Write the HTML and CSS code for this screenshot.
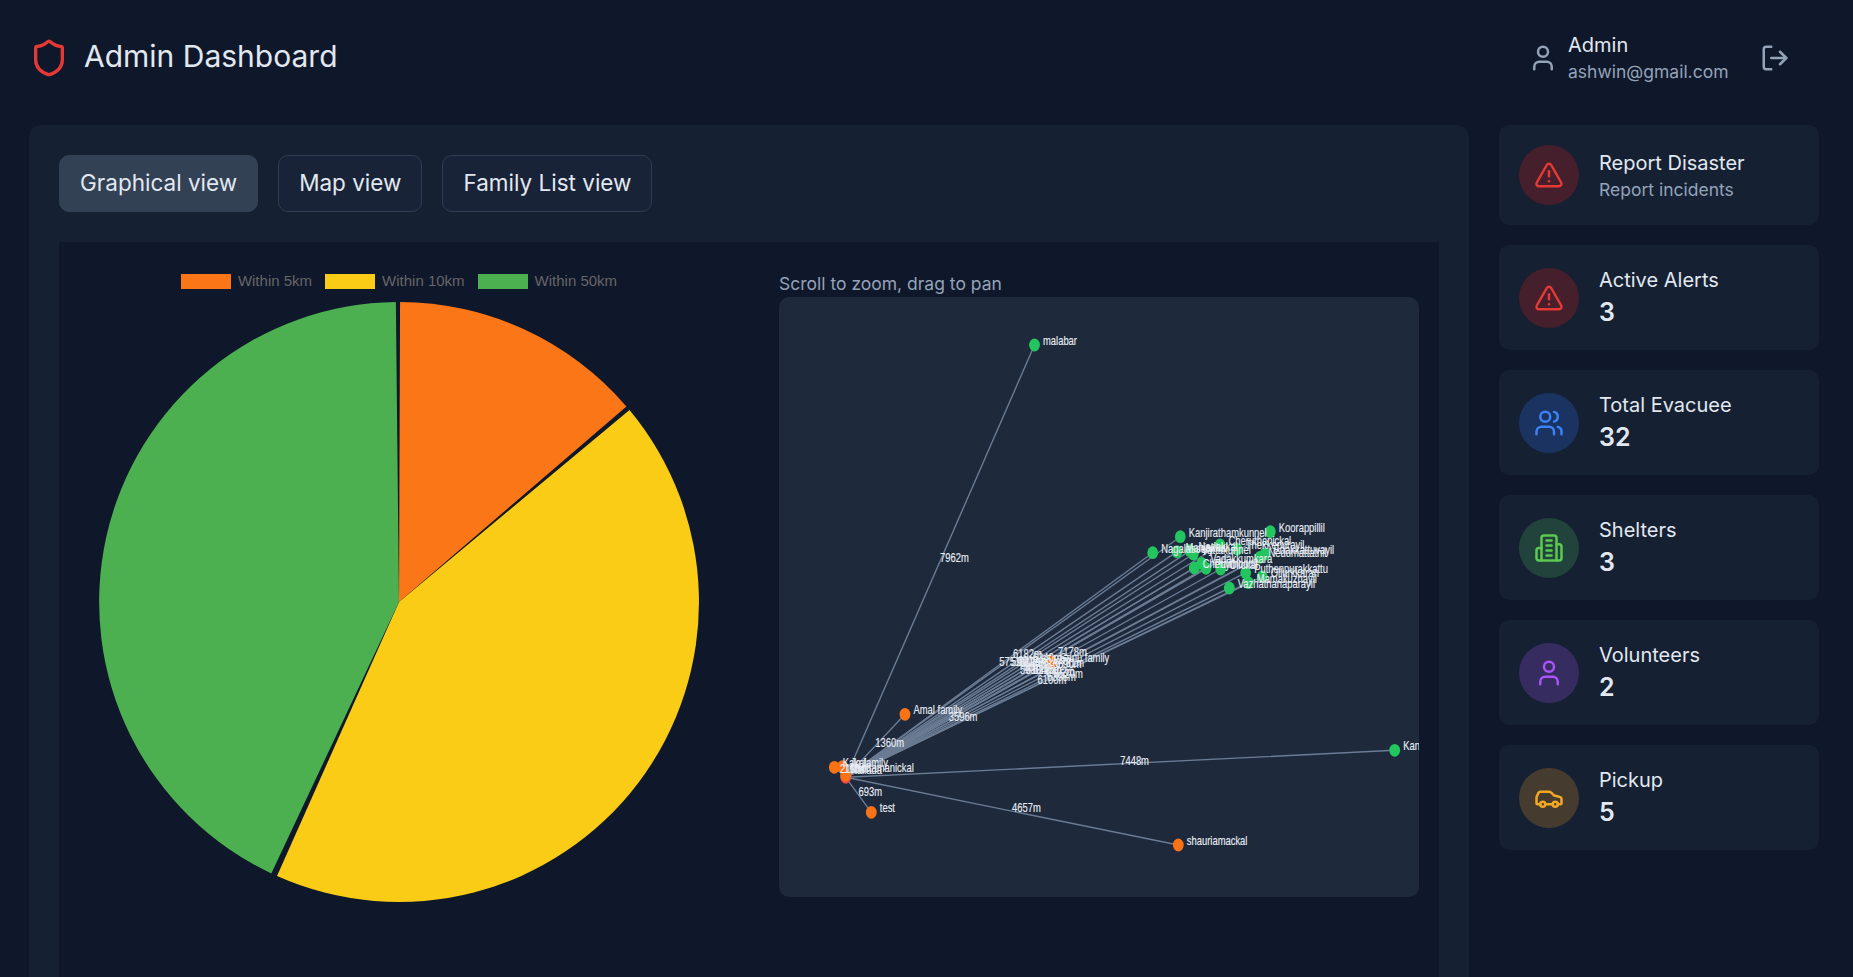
FILE: index.html
```html
<!DOCTYPE html>
<html>
<head>
  <title>Admin Dashboard</title>
  <link rel="stylesheet" href="styles.css">
</head>
<body>
  <!-- Header -->
  <header class="topBar">
    <div class="brand">
      <svg class="shieldIcon" viewBox="0 0 24 24"><path d="M20 13c0 5-3.5 7.5-7.66 8.95a1 1 0 0 1-.67-.01C7.5 20.5 4 18 4 13V6a1 1 0 0 1 1-1c2 0 4.5-1.2 6.24-2.72a1.17 1.17 0 0 1 1.52 0C14.51 3.81 17 5 19 5a1 1 0 0 1 1 1z"/></svg>
      <h1>Admin Dashboard</h1>
    </div>
    <div class="account">
      <svg class="accountIcon" viewBox="0 0 24 24"><path d="M19 21v-2a4 4 0 0 0-4-4H9a4 4 0 0 0-4 4v2"/><circle cx="12" cy="7" r="4"/></svg>
      <div>
        <div class="accountName">Admin</div>
        <div class="accountMail">ashwin@gmail.com</div>
      </div>
      <svg class="logoutIcon" viewBox="0 0 24 24"><path d="M9 21H5a2 2 0 0 1-2-2V5a2 2 0 0 1 2-2h4"/><polyline points="16 17 21 12 16 7"/><line x1="21" y1="12" x2="9" y2="12"/></svg>
    </div>
  </header>

  <div class="layout">
    <!-- Main panel -->
    <main class="panel">
      <div class="tabs">
        <button class="tab active">Graphical view</button>
        <button class="tab">Map view</button>
        <button class="tab">Family List view</button>
      </div>
      <div class="charts">
        <div class="pieCol">
          <div class="legend">
            <span class="swatch orange"></span><span class="legendText">Within 5km</span>
            <span class="swatch yellow"></span><span class="legendText">Within 10km</span>
            <span class="swatch green"></span><span class="legendText">Within 50km</span>
          </div>
          <svg class="pie" width="640" height="620" viewBox="0 0 640 620">
            <path fill="#fb7616" d="M320 310L321.05 10A300 300 0 0 1 547.4 114.4Z"/>
            <path fill="#facc15" d="M320 310L550.5 118A300 300 0 0 1 198 584.06Z"/>
            <path fill="#4caf50" d="M320 310L192.3 581.4A300 300 0 0 1 316.86 10.02Z"/>
          </svg>
        </div>
        <div class="graphCol">
          <p class="hint">Scroll to zoom, drag to pan</p>
          <div class="graphBox">
            <svg id="graph" width="640" height="600" viewBox="0 -0.5 640 600"></svg>
          </div>
        </div>
      </div>
    </main>

    <!-- Side cards -->
    <aside class="side">
      <div class="card">
        <span class="badge badgeRed"><svg viewBox="0 0 24 24"><path d="m21.73 18-8-14a2 2 0 0 0-3.48 0l-8 14A2 2 0 0 0 4 21h16a2 2 0 0 0 1.73-3"/><path d="M12 9v4"/><path d="M12 17h.01"/></svg></span>
        <div>
          <div class="cardTitle">Report Disaster</div>
          <div class="cardSub">Report incidents</div>
        </div>
      </div>
      <div class="card">
        <span class="badge badgeRed"><svg viewBox="0 0 24 24"><path d="m21.73 18-8-14a2 2 0 0 0-3.48 0l-8 14A2 2 0 0 0 4 21h16a2 2 0 0 0 1.73-3"/><path d="M12 9v4"/><path d="M12 17h.01"/></svg></span>
        <div>
          <div class="cardTitle">Active Alerts</div>
          <div class="cardValue">3</div>
        </div>
      </div>
      <div class="card">
        <span class="badge badgeBlue"><svg viewBox="0 0 24 24"><path d="M16 21v-2a4 4 0 0 0-4-4H6a4 4 0 0 0-4 4v2"/><circle cx="9" cy="7" r="4"/><path d="M22 21v-2a4 4 0 0 0-3-3.87"/><path d="M16 3.13a4 4 0 0 1 0 7.75"/></svg></span>
        <div>
          <div class="cardTitle">Total Evacuee</div>
          <div class="cardValue">32</div>
        </div>
      </div>
      <div class="card">
        <span class="badge badgeGreen"><svg viewBox="0 0 24 24"><path d="M6 22V4a2 2 0 0 1 2-2h8a2 2 0 0 1 2 2v18Z"/><path d="M6 12H4a2 2 0 0 0-2 2v6a2 2 0 0 0 2 2h2"/><path d="M18 9h2a2 2 0 0 1 2 2v9a2 2 0 0 1-2 2h-2"/><path d="M10 6h4"/><path d="M10 10h4"/><path d="M10 14h4"/><path d="M10 18h4"/></svg></span>
        <div>
          <div class="cardTitle">Shelters</div>
          <div class="cardValue">3</div>
        </div>
      </div>
      <div class="card">
        <span class="badge badgePurple"><svg viewBox="0 0 24 24"><path d="M19 21v-2a4 4 0 0 0-4-4H9a4 4 0 0 0-4 4v2"/><circle cx="12" cy="7" r="4"/></svg></span>
        <div>
          <div class="cardTitle">Volunteers</div>
          <div class="cardValue">2</div>
        </div>
      </div>
      <div class="card">
        <span class="badge badgeAmber"><svg viewBox="0 0 24 24"><path d="M19 17h2c.6 0 1-.4 1-1v-3c0-.9-.7-1.7-1.5-1.9C18.7 10.6 16 10 16 10s-1.3-1.4-2.2-2.3c-.5-.4-1.1-.7-1.8-.7H5c-.6 0-1.1.4-1.4.9l-1.4 2.9A3.7 3.7 0 0 0 2 12v4c0 .6.4 1 1 1h2"/><circle cx="7" cy="17" r="2"/><path d="M9 17h6"/><circle cx="17" cy="17" r="2"/></svg></span>
        <div>
          <div class="cardTitle">Pickup</div>
          <div class="cardValue">5</div>
        </div>
      </div>
    </aside>
  </div>

  <script src="graph.js"></script>
</body>
</html>
```

FILE: styles.css
```css
html, body {
  height: 100%;
  overflow: hidden;
}
body {
  margin: 0;
  background: #0f172a;
  color: #e2e8f0;
  font-family: Inter, "Noto Sans", sans-serif;
}
svg {
  fill: none;
  stroke: currentColor;
  stroke-width: 2;
  stroke-linecap: round;
  stroke-linejoin: round;
}
/* Header */
.topBar {
  display: flex;
  justify-content: space-between;
  align-items: center;
  height: 55px;
  padding: 30px 34px 40px 29px;
}
.brand {
  display: flex;
  align-items: center;
  gap: 15px;
}
.brand h1 {
  margin: 0 0 1px;
  font-size: 30px;
  font-weight: 400;
  line-height: 37.5px;
}
.shieldIcon {
  width: 40px;
  height: 40px;
  color: #e53935;
}
.account {
  display: flex;
  align-items: center;
  gap: 10px;
  padding-right: 29.5px;
}
.accountIcon {
  width: 30px;
  height: 30px;
  color: #94a3b8;
}
.accountName {
  font-size: 20px;
  line-height: 30px;
}
.accountMail {
  padding-bottom: 1px;
  font-size: 17.5px;
  line-height: 24px;
  color: #94a3b8;
}
.logoutIcon {
  width: 30px;
  height: 30px;
  margin-left: 21px;
  color: #94a3b8;
}
/* Layout */
.layout {
  display: grid;
  grid-template-columns: 1fr 320px;
  gap: 30px;
  padding: 0 34px 0 29px;
}
.panel {
  padding: 30px;
  background: #152033;
  border-radius: 12px;
}
.tabs {
  display: flex;
  gap: 20px;
  margin-bottom: 30px;
}
.tab {
  height: 57px;
  padding: 0 20px 1px;
  font-family: inherit;
  font-size: 22.5px;
  line-height: 30px;
  color: #e2e8f0;
  background: #192338;
  border: 1.25px solid #303c50;
  border-radius: 10px;
}
.tab.active {
  background: #334155;
  border-color: #334155;
}
/* Charts */
.charts {
  display: grid;
  grid-template-columns: 640px 640px;
  gap: 60px;
  height: 760px;
  padding: 30px 20px 0;
  background: #0f172a;
}
.pieCol {
  display: flex;
  flex-direction: column;
  align-items: center;
}
.legend {
  display: flex;
  align-items: center;
  height: 15px;
  margin-top: 2px;
  font-family: "Liberation Sans", Arial, sans-serif;
  font-size: 15px;
  line-height: 14px;
  color: #666;
}
.swatch {
  width: 50px;
  height: 15px;
  margin-right: 7px;
}
.legendText {
  margin-right: 13px;
  padding-bottom: 1px;
}
.legendText:last-child {
  margin-right: 0;
}
.orange { background: #fb7616; }
.yellow { background: #facc15; }
.green  { background: #4caf50; }
.pie {
  margin-top: 3px;
  stroke: none;
}
.hint {
  margin: 0;
  padding-bottom: 1px;
  font-size: 17.5px;
  line-height: 24px;
  color: #94a3b8;
}
.graphBox {
  width: 640px;
  height: 600px;
  overflow: hidden;
  background: #1e293b;
  border-radius: 10px;
}
#graph {
  display: block;
}
#graph text {
  font-family: "Liberation Sans", Arial, sans-serif;
  font-size: 12px;
  fill: #e9eef5;
  stroke: #e2e8f0;
  stroke-width: .15;
}
#graph line {
  stroke: #6b7c94;
  stroke-width: 1.4;
}
#graph ellipse {
  stroke: none;
}
/* Side cards */
.side {
  display: flex;
  flex-direction: column;
  gap: 20px;
}
.card {
  display: flex;
  align-items: center;
  gap: 20px;
  padding: 20px;
  background: #152033;
  border-radius: 10px;
}
.badge {
  display: flex;
  flex: none;
  align-items: center;
  justify-content: center;
  width: 60px;
  height: 60px;
  border-radius: 50%;
}
.badge svg {
  width: 30px;
  height: 30px;
}
.badgeRed    { background: #451f2b; color: #e53935; }
.badgeBlue   { background: #1b3360; color: #3b82f6; }
.badgeGreen  { background: #22433c; color: #5cc94f; }
.badgePurple { background: #372c5f; color: #a855f7; }
.badgeAmber  { background: #453c2f; color: #f3a723; }
.cardTitle {
  font-size: 20px;
  line-height: 30px;
}
.cardSub {
  padding-bottom: 1px;
  font-size: 17.5px;
  line-height: 24px;
  color: #94a3b8;
}
.cardValue {
  padding-bottom: 1px;
  font-size: 25px;
  font-weight: 600;
  line-height: 34px;
}
```

FILE: graph.js
```js
// Distance graph: one source, a line and a label to each family
var source = { x: 66.7, y: 479.8 };
var SVG_NS = "http://www.w3.org/2000/svg";
var graph = document.getElementById("graph");
var ORANGE = "#f97316";
var GREEN = "#22c55e";

var nodes = [
  [255.5, 47.5, "malabar", "7962m", GREEN],
  [615.7, 452.8, "Kanjirakkal", "7448m", GREEN],
  [399.3, 547.5, "shauriamackal", "4657m", ORANGE],
  [92.3, 514.8, "test", "693m", ORANGE],
  [126, 416.8, "Amal family", "1360m", ORANGE],
  [272.7, 364.2, "Sanu family", "3596m", ORANGE],
  [55.3, 469.8, "Kakal", "210m", ORANGE],
  [63.3, 469.2, "Jo family", "160m", ORANGE],
  [491.3, 234.2, "Koorappillil", "7178m", GREEN],
  [401.3, 239.2, "Kanjirathamkunnel", "6182m", GREEN],
  [373.7, 255.2, "Nagalassery", "5751m", GREEN],
  [398, 254.2, "Manjakkal", "5920m", GREEN],
  [411, 253.2, "Nadakkal", "6012m", GREEN],
  [414.3, 256.5, "Vattakunnel", "6035m", GREEN],
  [441, 247.5, "Cheruthanickal", "6340m", GREEN],
  [458.3, 251.8, "Thekkepurayil", "6512m", GREEN],
  [481, 259.8, "Nedumattathil", "6690m", GREEN],
  [486, 256.5, "Edakkattuvayil", "6731m", GREEN],
  [415.3, 270.5, "Cheriyil", "5988m", GREEN],
  [422.7, 265.8, "Vadakkumkara", "6077m", GREEN],
  [427, 270.8, "Pulimoottil", "6104m", GREEN],
  [441.7, 271.5, "Olickal", "6215m", GREEN],
  [466.7, 275.2, "Puthenpurakkattu", "6402m", GREEN],
  [469.3, 285.2, "Mamakuzhayil", "6398m", GREEN],
  [483.3, 279.2, "Ollurkkaran", "6520m", GREEN],
  [450.3, 290.5, "Vazhathanaparayil", "6100m", GREEN]
];

function add(tag, attrs) {
  var el = document.createElementNS(SVG_NS, tag);
  for (var key in attrs) {
    el.setAttribute(key, attrs[key]);
  }
  graph.appendChild(el);
  return el;
}

function addNode(x, y, color) {
  add("ellipse", { cx: x, cy: y, rx: 5.4, ry: 6.4, fill: color });
}

// labels are drawn narrow, the same way as the nodes
function addLabel(x, y, text) {
  var label = add("text", { transform: "translate(" + x + " " + y + ") scale(.785 1)" });
  label.textContent = text;
}

nodes.forEach(function (n) {
  add("line", { x1: source.x, y1: source.y, x2: n[0], y2: n[1] });
});
addNode(source.x, source.y, "#ef4444");
nodes.forEach(function (n) {
  addNode(n[0], n[1], n[4]);
});
addNode(source.x, source.y - 2, ORANGE);
nodes.forEach(function (n) {
  addLabel(n[0] + 8.5, n[1], n[2]);
  addLabel((source.x + n[0]) / 2, (source.y + n[1]) / 2 + 1, n[3]);
});
addLabel(source.x + 9, source.y - 5, "Kottamanickal");
addLabel(source.x + 5, source.y - 3, "Kallada");
```
